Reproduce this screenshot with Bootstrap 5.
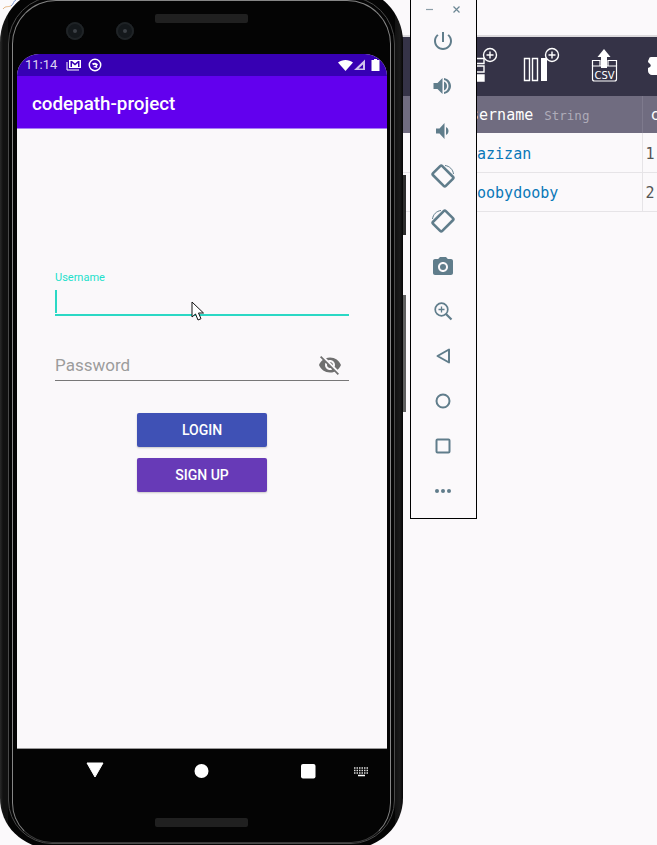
<!DOCTYPE html>
<html lang="en">
<head>
<meta charset="utf-8">
<title>codepath-project</title>
<link href="https://cdn.jsdelivr.net/npm/bootstrap@5.3.0/dist/css/bootstrap.min.css" rel="stylesheet">
<style>
html,body{margin:0;height:845px;overflow:hidden;background:#fbf9fb;font-family:Roboto,"Liberation Sans",sans-serif}
.desk{width:657px;height:845px;overflow:hidden;background:#fbf9fb}
.scribble{left:0;top:0}
/* database browser window */
.dbwin{left:380px;top:35px;width:277px;border-top:2px solid #dcdadd}
.dbbar{height:59px;background:#353347}
.dbbar svg{position:absolute;left:0;top:0}
.dbtable{width:100%;margin:0;table-layout:fixed;font-family:"DejaVu Sans Mono","Liberation Mono",monospace;font-size:15px;--bs-table-bg:transparent}
.dbtable th,.dbtable td{padding:0;white-space:nowrap;overflow:hidden;vertical-align:middle;border-bottom:1px solid #e6e4e7}
.dbtable th{height:37px;background:#706c80;color:#fff;font-weight:400;border-bottom:0;border-right:1px solid #7e7a8d;padding:2px 0 0 81px}
.dbtable td{height:39px;color:#0a78b8;padding:3px 0 0 88px;border-right:1px solid #e6e4e7}
.dbtable th + th{padding-left:8px;border-right:0}
.dbtable td + td{color:#555;padding-left:3px;border-right:0}
.ctype{color:#aeabb8;font-size:12.5px;margin-left:11px}
.colname{width:262px}
/* phone */
.phone{left:0;top:-12px;width:403px;height:860px;border-radius:54px 54px 50px 50px;background:linear-gradient(90deg,#2a2a2a,#111 3px,#111 8px,#040404 8px,#040404 395px,#111 395px,#1a1a1a 400px,#050505);padding:66px 16px 0 17px}
.ringa,.ringb{border-style:solid;pointer-events:none}
.ringa{left:8px;right:8px;top:8px;bottom:4px;border-width:1.5px;border-color:#4a4a4a;border-radius:48px 48px 44px 44px}
.ringb{left:12px;right:12px;top:12px;bottom:5px;border-width:1.5px;border-color:#868686 #868686 #3a3a3a;border-radius:44px 44px 40px 40px;background:#040404}
.sidekey{background:#2c2c2c}
.key1{left:403px;top:175px;width:3px;height:60px}
.key2{left:402px;top:295px;width:4px;height:117px;background:#5f5f5f}
.grille{left:155px;top:26px;width:93px;height:9px;background:#202020;border-radius:2px}
.lens{top:34px;width:18px;height:18px;border-radius:50%;background:#14181b;box-shadow:inset 0 0 0 2px #1f2326}
.lens::after{content:"";position:absolute;left:7px;top:7px;width:4px;height:4px;border-radius:50%;background:#3b4045}
.lens1{left:66px}.lens2{left:116px}
.screen{width:370px;height:695px;border-radius:22px 22px 0 0;overflow:hidden;background:#faf8fa;border-bottom:1px solid #999}
.statusline{height:22px;background:#3700b3;color:#ddd3f3;font-size:13px;padding:0 7px 0 8px}
.mailicon{margin-left:9px}
.ringicon{margin-left:5px}
.signalicon{margin-left:0}
.batteryicon{margin-left:5px}
.appline{height:53px;background:#6200ee;color:#fff;font-size:18.8px;font-weight:500;padding:4px 0 0 15px;border-bottom:1px solid #a77df5}
.formbox{padding:142px 38px 0 38px}
.fieldlabel{color:#22e0cb;font-size:11px;line-height:14px;height:14px;margin:0}
.userwrap{height:31px;padding-top:5px;border-bottom:2px solid #2ad8c4}
.caretbar{width:2px;height:23px;background:#2ad8c4}
.passwrap{height:30px;margin-top:35px;border-bottom:1px solid #777}
.passinput{border:0;background:transparent;outline:0;padding:0;flex:1 1 auto;min-width:0;font-size:17px;line-height:26px;height:28px;font-family:Roboto,sans-serif;color:#333}
.passinput::placeholder{color:#9c9c9c;opacity:1}
.eyeicon{margin-right:7px;margin-top:2px}
.btnstack{margin-top:32px;gap:11px}
.appbtn{width:130px;height:34px;padding:0;border:0;border-radius:2px;color:#fff;font-size:14px;font-weight:500;line-height:34px;box-shadow:0 1px 2px rgba(0,0,0,.2)}
.loginbtn,.loginbtn:hover{background:#3f51b5;color:#fff}
.signbtn,.signbtn:hover{background:#673ab7;color:#fff}
.navlayer{left:0;top:0}
.pointer{left:191px;top:301px}
/* emulator toolbar */
.emu{left:410px;top:-2px;width:67px;height:521px;background:#fbf9fb;border:1.5px solid #000}
.emutop{height:19px;margin-top:1px;padding:0 16px 0 15px}
.emulist{margin-top:-1px;padding-right:1px}
.emubtn{height:45px}
</style>
</head>
<body>
<div class="desk position-relative">
  <svg class="scribble position-absolute" width="24" height="14"><path d="M3 9 C6 5 9 8 12 5" stroke="#e3b27d" fill="none"/><path d="M11 6 C14 4 13 1 16 0" stroke="#7d9bd8" fill="none"/></svg>

  <div class="dbwin position-absolute">
    <div class="dbbar position-relative">
      <svg width="277" height="59" viewBox="380 37 277 59" fill="none" stroke="#fff">
        <g stroke-width="1.4">
          <path d="M470 58.5h14v5h-14zM470 66h14v6h-14z"/>
          <path d="M470 75h14v6h-14z" fill="#fff"/>
          <circle cx="490" cy="55" r="6.5" fill="#353347"/>
          <path d="M486.5 55h7M490 51.5v7"/>
          <path d="M524.5 58.5h5v22h-5zM532.500 58.500h5v22h-5z"/>
          <path d="M541 58h6v23h-6z" fill="#fff" stroke="none"/>
          <circle cx="552" cy="55" r="6.500" fill="#353347"/>
          <path d="M548.500 55h7M552 51.500v7"/>
          <path d="M592.500 66v-5.500h7.500V66M608 66v-5.500h8.500V66" stroke-width="1.200"/>
          <path d="M592.500 66h24v13a2 2 0 0 1-2 2h-20a2 2 0 0 1-2-2z" stroke-width="1.200"/>
        </g>
        <path d="M604 49l6.500 8H607v11h-6V57h-3.500z" fill="#fff" stroke="none"/>
        <text x="604.500" y="79" text-anchor="middle" fill="#fff" stroke="none" font-family="DejaVu Sans,sans-serif" font-size="10">CSV</text>
        <path d="M657 57h-5c-1 0-3 0-3 2-1 1-1 3-1 3l2 2c1 1 1 2 0 3l-2 1v3c0 2 2 4 4 4h5z" fill="#fff" stroke="none"/>
      </svg>
    </div>
    <table class="table dbtable">
      <colgroup><col class="colname"><col></colgroup>
      <thead><tr><th>username<span class="ctype">String</span></th><th>c</th></tr></thead>
      <tbody>
        <tr><td>aazizan</td><td>1</td></tr>
        <tr><td>boobydooby</td><td>2</td></tr>
      </tbody>
    </table>
  </div>

  <div class="sidekey key1 position-absolute"></div>
  <div class="sidekey key2 position-absolute"></div>

  <div class="phone position-absolute">
    <div class="ringa position-absolute"></div>
    <div class="ringb position-absolute"></div>
    <div class="grille position-absolute"></div>
    <div class="lens lens1 position-absolute"></div>
    <div class="lens lens2 position-absolute"></div>

    <div class="screen d-flex flex-column position-relative">
      <div class="statusline d-flex align-items-center">
        <span>11:14</span>
        <svg class="mailicon" width="17" height="14" viewBox="0 0 17 14"><path d="M3 2h12v8H3z" fill="#fff"/><path d="M4.500 3v6h1.500V5l3 2.500L12 5v4h1.500V3H12L9 5.500 6 3z" fill="#3700b3"/><path d="M1 4v8h12" stroke="#fff" fill="none"/></svg>
        <svg class="ringicon" width="14" height="14" viewBox="0 0 14 14"><circle cx="7" cy="7" r="5.700" fill="none" stroke="#fff" stroke-width="1.500"/><path d="M4 5.500c2-1.500 4.500-1 6 1l-1 1.500c-1-1.300-2.500-1.500-3.800-.8zM5 9l3.500-2 1 3z" fill="#fff"/></svg>
        <div class="ms-auto d-flex align-items-center">
          <svg width="15" height="12" viewBox="0 0 15 12"><path d="M0 3.500C4 0 11 0 15 3.500L7.500 12z" fill="#fff"/></svg>
          <svg class="signalicon" width="13" height="12" viewBox="0 0 13 12"><path d="M12 .5V11H1z" fill="#cfc4ec"/><path d="M10 5.500V9.500H5.500z" fill="#3700b3"/></svg>
          <svg class="batteryicon" width="9" height="12" viewBox="0 0 9 12"><path d="M3 0h3v1h2.500v11H.500V1H3z" fill="#fff"/></svg>
        </div>
      </div>
      <div class="appline d-flex align-items-center">codepath-project</div>
      <div class="formbox flex-grow-1">
        <p class="fieldlabel">Username</p>
        <div class="userwrap"><div class="caretbar"></div></div>
        <div class="passwrap d-flex align-items-start">
          <input class="passinput" type="password" placeholder="Password" aria-label="Password">
          <svg class="eyeicon" width="24" height="24" viewBox="0 0 24 24" fill="#6f6f6f"><path d="M12 7c2.760 0 5 2.240 5 5 0 .65-.13 1.260-.36 1.830l2.920 2.920c1.510-1.260 2.700-2.890 3.430-4.750-1.730-4.390-6-7.500-11-7.500-1.400 0-2.740.25-3.980.7l2.160 2.160C10.740 7.130 11.350 7 12 7zM2 4.270l2.280 2.280.46.46C3.080 8.300 1.780 10.020 1 12c1.730 4.390 6 7.500 11 7.500 1.550 0 3.030-.3 4.380-.84l.42.42L19.730 22 21 20.730 3.270 3 2 4.270zM7.530 9.800l1.550 1.550c-.05.21-.08.43-.08.65 0 1.660 1.340 3 3 3 .22 0 .44-.03.65-.08l1.550 1.550c-.67.33-1.410.53-2.200.53-2.760 0-5-2.240-5-5 0-.79.2-1.530.53-2.200zm4.310-.78l3.150 3.150.02-.16c0-1.660-1.340-3-3-3l-.17.01z"/></svg>
        </div>
        <div class="btnstack d-flex flex-column align-items-center">
          <button type="button" class="btn appbtn loginbtn">LOGIN</button>
          <button type="button" class="btn appbtn signbtn">SIGN UP</button>
        </div>
      </div>
    </div>
  </div>

  <svg class="navlayer position-absolute" width="403" height="845" viewBox="0 0 403 845" aria-hidden="true">
    <path d="M87 763h16l-8 14z" fill="#fff" stroke="#fff" stroke-linejoin="round"/>
    <circle cx="201.500" cy="771" r="7" fill="#fff"/>
    <rect x="301" y="764" width="14.500" height="14.500" rx="2" fill="#fff"/>
    <path d="M354 768h15M354 770.500h15M354 773h15" stroke="#ddd" stroke-width="1.500" stroke-dasharray="1.500 1"/>
    <path d="M358 775.500h7" stroke="#fff" stroke-width="1.500"/>
    <rect x="155" y="818" width="93" height="9" rx="2" fill="#202020"/>
  </svg>

  <svg class="pointer position-absolute" width="15" height="22" viewBox="0 0 15 22"><path d="M1 1v15l3.500-3 2.500 6 3-1.300-2.500-5.700h5z" fill="#fff" stroke="#111" stroke-width="1"/></svg>

  <div class="emu position-absolute d-flex flex-column">
    <div class="emutop d-flex justify-content-between align-items-center">
      <svg width="7" height="7" viewBox="0 0 7 7"><path d="M0 3.500h7" stroke="#8c9ea8" stroke-width="1.200"/></svg>
      <svg width="7" height="7" viewBox="0 0 7 7"><path d="M.5.500l6 6M6.500.500l-6 6" stroke="#6c8794" stroke-width="1.200"/></svg>
    </div>
    <div class="emulist d-flex flex-column align-items-center">
      <div class="emubtn d-flex align-items-center"><svg width="24" height="24" viewBox="0 0 24 24" fill="#607d8b"><path d="M13 3h-2v10h2V3zm4.830 2.170l-1.420 1.420C17.990 7.860 19 9.810 19 12c0 3.870-3.130 7-7 7s-7-3.130-7-7c0-2.190 1.010-4.140 2.580-5.420L6.170 5.170C4.230 6.820 3 9.260 3 12c0 4.970 4.030 9 9 9s9-4.030 9-9c0-2.740-1.230-5.180-3.170-6.830z"/></svg></div>
      <div class="emubtn d-flex align-items-center"><svg width="24" height="24" viewBox="0 0 24 24" fill="#607d8b"><path d="M2.500 9v6h4l5 5V4l-5 5z"/><path d="M13 4v2c3 .8 4.500 3 4.500 6s-1.500 5.200-4.500 6v2c4.200-.9 7-4 7-8s-2.800-7.100-7-8z"/><path d="M13 7.500v9c1.800-.9 3-2.500 3-4.500s-1.200-3.600-3-4.500z"/></svg></div>
      <div class="emubtn d-flex align-items-center"><svg width="24" height="24" viewBox="0 0 24 24" fill="#607d8b"><path d="M5 9.500v5h3.500l5 5.500V4L8.500 9.500z"/><path d="M15 8v8c1.500-.7 2.500-2.200 2.500-4S16.500 8.700 15 8z"/></svg></div>
      <div class="emubtn d-flex align-items-center"><svg width="26" height="26" viewBox="0 0 26 26" fill="none" stroke="#607d8b"><rect x="6.500" y="4" width="13" height="18" rx="1.500" stroke-width="2.600" transform="rotate(-45 13 13)"/><path d="M15 2.500c4.500.5 8 4 8.500 8.500" stroke-width="1"/></svg></div>
      <div class="emubtn d-flex align-items-center"><svg width="26" height="26" viewBox="0 0 26 26" fill="none" stroke="#607d8b"><rect x="6.500" y="4" width="13" height="18" rx="1.500" stroke-width="2.600" transform="rotate(45 13 13)"/><path d="M11 2.500c-4.500.5-8 4-8.500 8.500" stroke-width="1"/></svg></div>
      <div class="emubtn d-flex align-items-center"><svg width="24" height="24" viewBox="0 0 24 24" fill="#607d8b"><path d="M9 3L7.170 5H4c-1.100 0-2 .9-2 2v12c0 1.100.9 2 2 2h16c1.100 0 2-.9 2-2V7c0-1.100-.9-2-2-2h-3.170L15 3H9zm3 15c-2.760 0-5-2.240-5-5s2.240-5 5-5 5 2.240 5 5-2.240 5-5 5z"/><circle cx="12" cy="13" r="3"/></svg></div>
      <div class="emubtn d-flex align-items-center"><svg width="24" height="24" viewBox="0 0 24 24" fill="none" stroke="#607d8b"><circle cx="10.500" cy="10.500" r="6.300" stroke-width="1.700"/><path d="M15 15l5.500 5.500" stroke-width="2.200"/><path d="M7.500 10.500h6M10.500 7.500v6" stroke-width="1.300"/></svg></div>
      <div class="emubtn d-flex align-items-center"><svg width="24" height="24" viewBox="0 0 24 24" fill="none" stroke="#607d8b" stroke-width="2" stroke-linejoin="round"><path d="M18 5.500v13L6.500 12z"/></svg></div>
      <div class="emubtn d-flex align-items-center"><svg width="24" height="24" viewBox="0 0 24 24" fill="none" stroke="#607d8b" stroke-width="2"><circle cx="12" cy="12" r="6.500"/></svg></div>
      <div class="emubtn d-flex align-items-center"><svg width="24" height="24" viewBox="0 0 24 24" fill="none" stroke="#607d8b" stroke-width="2" stroke-linejoin="round"><rect x="5.500" y="5.500" width="13" height="13" rx="1"/></svg></div>
      <div class="emubtn d-flex align-items-center"><svg width="24" height="24" viewBox="0 0 24 24" fill="#607d8b"><circle cx="6" cy="12" r="2"/><circle cx="12" cy="12" r="2"/><circle cx="18" cy="12" r="2"/></svg></div>
    </div>
  </div>
</div>
</body>
</html>
